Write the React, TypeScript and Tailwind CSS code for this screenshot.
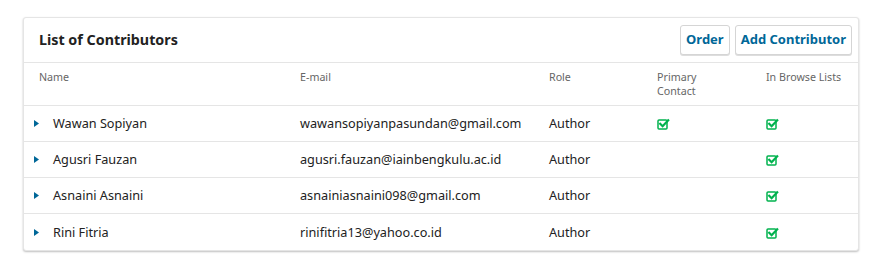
import React from "react";

const rows = [
  { name: "Wawan Sopiyan", email: "wawansopiyanpasundan@gmail.com", role: "Author", primary: true, browse: true },
  { name: "Agusri Fauzan", email: "agusri.fauzan@iainbengkulu.ac.id", role: "Author", primary: false, browse: true },
  { name: "Asnaini Asnaini", email: "asnainiasnaini098@gmail.com", role: "Author", primary: false, browse: true },
  { name: "Rini Fitria", email: "rinifitria13@yahoo.co.id", role: "Author", primary: false, browse: true },
];

function Check() {
  return (
    <svg width="13" height="12" viewBox="0 0 13 12" className="block">
      <rect x="1" y="2" width="9" height="9" rx="1" fill="none" stroke="#00b24e" strokeWidth="1.5" />
      <path d="M3.2 5.8 L5.6 8.2 L11.2 2.2" fill="none" stroke="#00b24e" strokeWidth="2.2" strokeLinecap="square" />
    </svg>
  );
}

function Caret() {
  return (
    <svg width="5" height="7" viewBox="0 0 5 7" className="block">
      <path d="M0 0 L5 3.5 L0 7 Z" fill="#006798" />
    </svg>
  );
}

const cols = "grid grid-cols-[276px_249px_108px_109px_1fr]";

export default function App() {
  return (
    <div className="bg-white w-[881px] h-[263px] pt-[17px] pl-[23px]" style={{ fontFamily: '"Noto Sans", "Open Sans", sans-serif' }}>
      <div className="w-[836px] border border-[#e5e5e5] rounded-[3px] shadow-[0_1px_2px_rgba(0,0,0,0.25)] bg-white">
        <div className="h-[45px] flex items-center justify-between pl-[15px] pr-[6px] border-b border-[#e5e5e5]">
          <h2 className="text-[14.3px] font-bold text-[#222] leading-none">List of Contributors</h2>
          <div className="flex gap-[5px]">
            <button className="h-[30px] px-[5px] border border-[#d5d5d5] rounded-[3px] shadow-[0_1px_0_#ddd] text-[13px] font-bold text-[#006798] bg-white">Order</button>
            <button className="h-[30px] px-[5px] border border-[#d5d5d5] rounded-[3px] shadow-[0_1px_0_#ddd] text-[13px] font-bold text-[#006798] bg-white">Add Contributor</button>
          </div>
        </div>
        <div className={`${cols} h-[43px] pt-[7px] text-[10.7px] leading-[14px] text-[#666] border-b border-[#e5e5e5]`}>
          <div className="pl-[15px]">Name</div>
          <div>E-mail</div>
          <div>Role</div>
          <div className="w-[60px]">Primary Contact</div>
          <div>In Browse Lists</div>
        </div>
        {rows.map((r, i) => (
          <div key={r.name} className={`${cols} h-[36px] pt-[1px] items-center text-[12.7px] text-[#222] ${i < rows.length - 1 ? "border-b border-[#e5e5e5]" : ""}`}>
            <div className="flex items-center pl-[10px]">
              <Caret />
              <span className="ml-[14px]">{r.name}</span>
            </div>
            <div>{r.email}</div>
            <div>{r.role}</div>
            <div>{r.primary ? <Check /> : null}</div>
            <div>{r.browse ? <Check /> : null}</div>
          </div>
        ))}
      </div>
    </div>
  );
}
